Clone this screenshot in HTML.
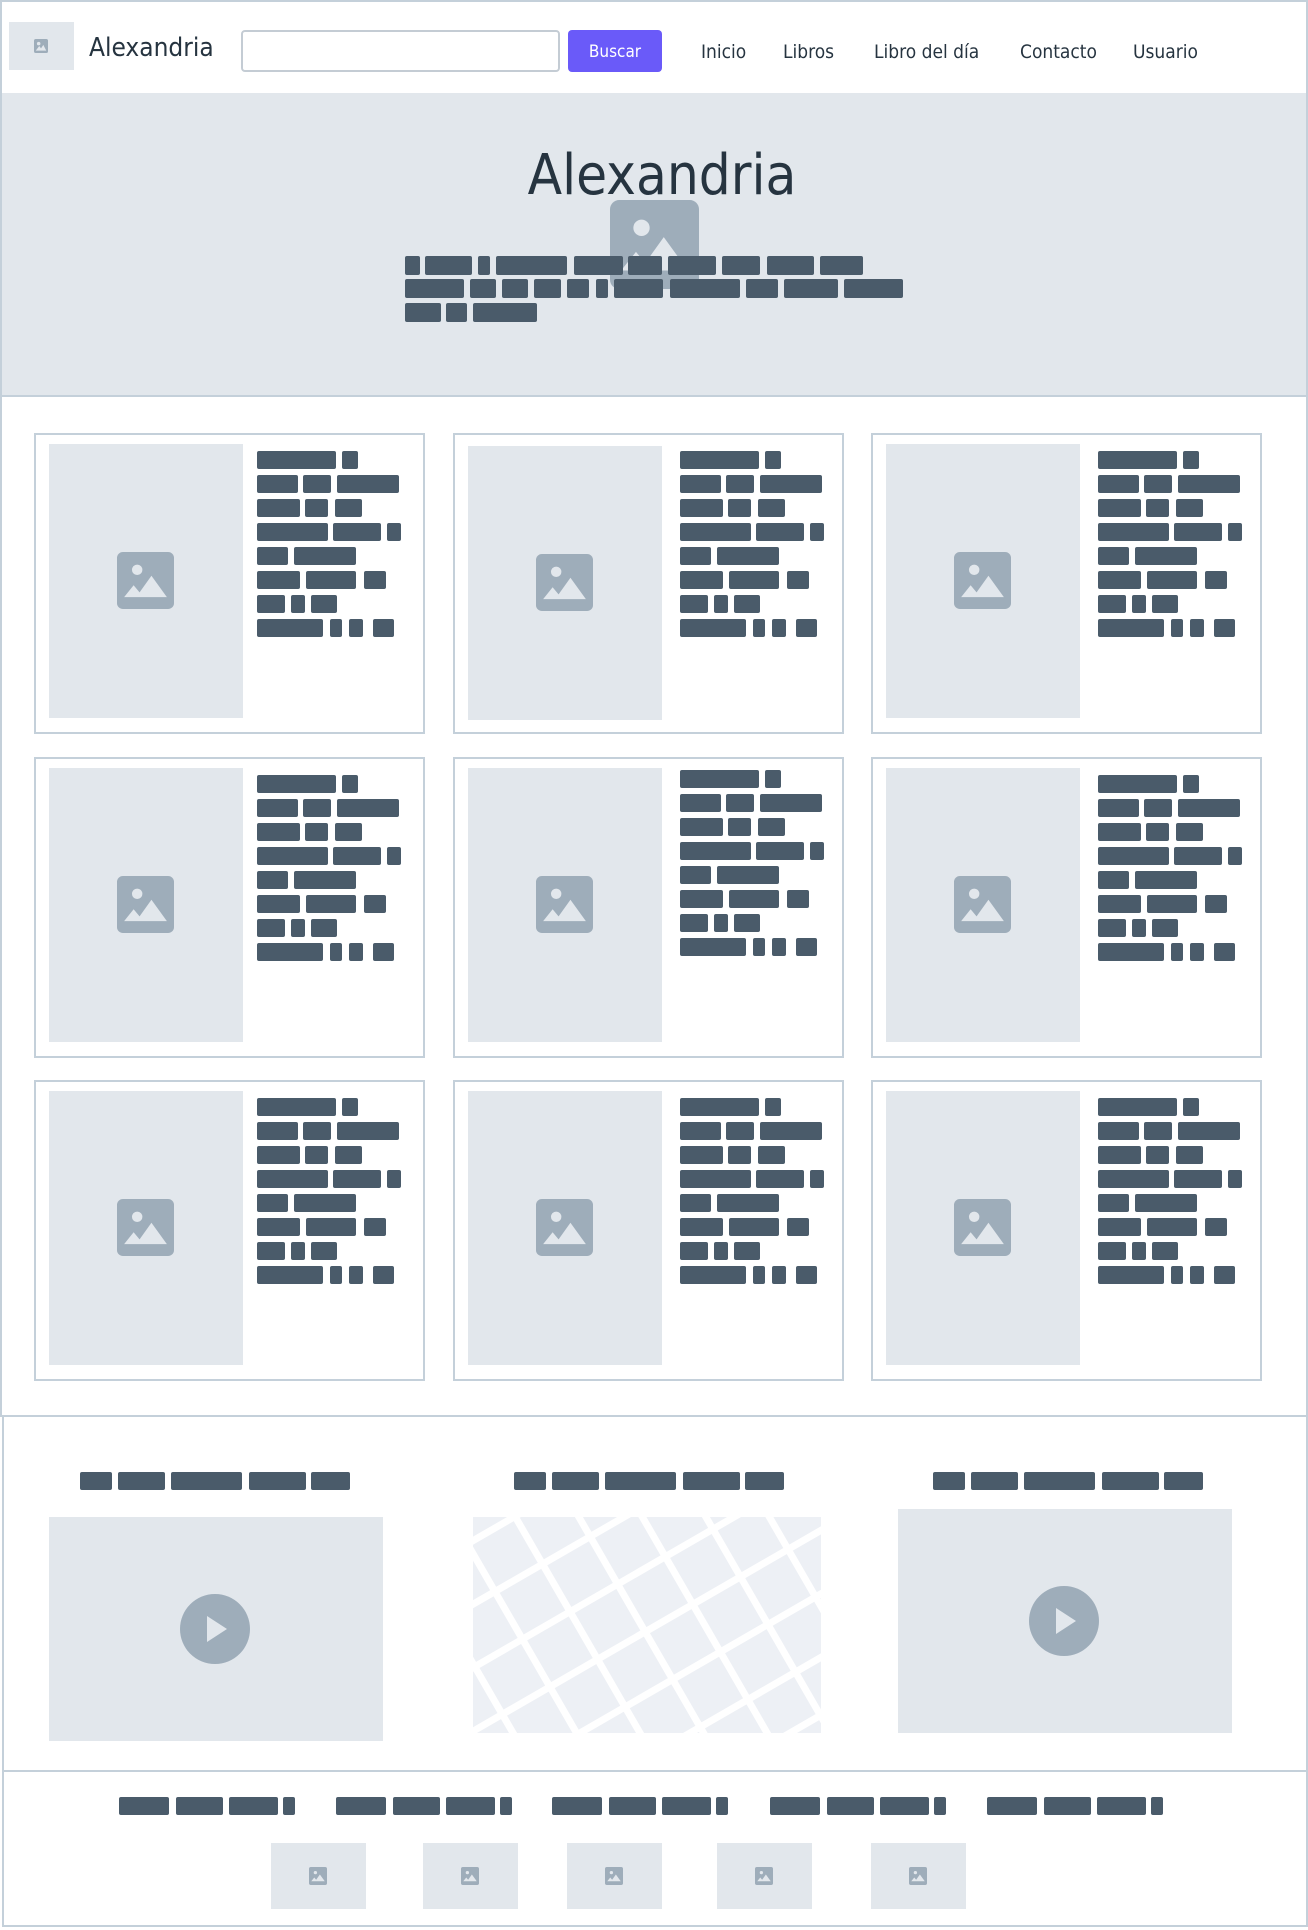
<!DOCTYPE html>
<html><head><meta charset="utf-8"><style>
*{box-sizing:border-box;margin:0;padding:0}
html,body{width:1308px;height:1930px;overflow:hidden}
body{background:#fff;font-family:"DejaVu Sans","Liberation Sans",sans-serif;position:relative;color:#263440}
.a{position:absolute}
.b{position:absolute;background:#4a5b6a;border-radius:2px}
.ph{position:absolute;background:#e2e7ec}
.bd{position:absolute;border:2px solid #c4d0da}
.nav a{position:absolute;top:41px;font-size:19px;color:#263440;text-decoration:none;font-family:"DejaVu Sans Condensed","DejaVu Sans",sans-serif}
</style></head><body>
<div class="bd" style="left:0;top:0;width:1308px;height:95px"></div>
<div class="ph" style="left:9px;top:22px;width:65px;height:48px"></div>
<svg class="a" style="left:34px;top:39px" width="14" height="14" viewBox="0 0 24 24"><rect width="24" height="24" rx="3" fill="#9eadba"/><circle cx="8" cy="8" r="3" fill="#e2e7ec"/><path d="M3 20l6-8 3 4 4-6 5 10z" fill="#e2e7ec"/></svg>
<div class="a" style="left:89px;top:33px;font-size:26px;font-family:'DejaVu Sans Condensed','DejaVu Sans',sans-serif">Alexandria</div>
<div class="a" style="left:241px;top:30px;width:319px;height:42px;border:2px solid #c4ccd4;border-radius:4px"></div>
<div class="a" style="left:568px;top:30px;width:94px;height:42px;background:#6a5af9;border-radius:4px;color:#fff;font-size:17px;line-height:44px;text-align:center;font-family:'DejaVu Sans Condensed',sans-serif">Buscar</div>
<div class="nav"><a style="left:701px">Inicio</a><a style="left:783px">Libros</a><a style="left:874px">Libro del día</a><a style="left:1020px">Contacto</a><a style="left:1133px">Usuario</a></div>

<div class="ph" style="left:0;top:93px;width:1308px;height:304px;border-left:2px solid #c4d0da;border-right:2px solid #c4d0da;border-bottom:2px solid #c4d0da"></div>
<div class="a" style="left:0;width:1308px;padding-left:16px;top:143px;text-align:center;font-size:56px;color:#263440;font-family:'DejaVu Sans Condensed','DejaVu Sans',sans-serif">Alexandria</div>
<svg class="a" style="left:610px;top:200px" width="89" height="89" viewBox="0 0 24 24"><rect width="24" height="24" rx="2.5" fill="#9eadba"/><circle cx="8.5" cy="7.5" r="2.2" fill="#e2e7ec"/><path d="M3 19l4-5 2.5 3 5-7L21 19z" fill="#e2e7ec"/></svg>

<div class="bd" style="left:0;top:397px;width:1308px;height:1020px;border-top:0"></div>

<div class="bd" style="left:2px;top:1415px;width:1306px;height:357px"></div>
<div class="ph" style="left:49px;top:1517px;width:334px;height:224px"></div>
<svg class="a" style="left:180px;top:1594px" width="70" height="70" viewBox="0 0 70 70"><circle cx="35" cy="35" r="35" fill="#9eadba"/><path d="M27 22l20 13-20 13z" fill="#e2e7ec"/></svg>
<svg class="a" style="left:473px;top:1517px" width="348" height="216" viewBox="0 0 348 216"><rect width="348" height="216" fill="#edf0f5"/>
<g stroke="#fff" stroke-width="7" fill="none" transform="translate(174 108) rotate(-30)">
<path d="M-300 -160H300M-300 -105H300M-300 -50H300M-300 5H300M-300 60H300M-300 115H300M-300 165H300"/>
<path d="M-280 -300V300M-225 -300V300M-170 -300V300M-115 -300V300M-60 -300V300M-5 -300V300M50 -300V300M105 -300V300M160 -300V300M215 -300V300M270 -300V300"/>
</g></svg>
<div class="ph" style="left:898px;top:1509px;width:334px;height:224px"></div>
<svg class="a" style="left:1029px;top:1586px" width="70" height="70" viewBox="0 0 70 70"><circle cx="35" cy="35" r="35" fill="#9eadba"/><path d="M27 22l20 13-20 13z" fill="#e2e7ec"/></svg>

<div class="bd" style="left:2px;top:1770px;width:1306px;height:157px"></div>
<script>
var s=1.2305;
function bar(px,x,y,w,h){var d=document.createElement('div');d.className='b';d.style.left=(px+x)+'px';d.style.top=y+'px';d.style.width=w+'px';d.style.height=h+'px';document.body.appendChild(d);}
function row(x0,y,segs,h){segs.forEach(function(g){bar(x0,Math.round(g[0]*s),y,Math.round((g[1]-g[0])*s),h||18);});}
row(405,256,[[0,12],[16,54],[59,69],[74,132],[137,177],[181,209],[214,253],[258,289],[294,332],[337,372]],19);
row(405,279,[[0,48],[53,74],[79,100],[105,127],[132,150],[155,165],[170,210],[215,272],[277,303],[308,352],[357,405]],19);
row(405,303,[[0,29],[33,50],[55,107]],19);
var L=[[[0,64],[69,82]],[[0,33],[37,60],[65,115]],[[0,35],[39,58],[63,85]],[[0,58],[62,101],[106,117]],[[0,25],[30,80]],[[0,35],[40,81],[87,105]],[[0,23],[28,39],[44,65]],[[0,54],[59,69],[75,86],[94,111]]];
var cx=[34,453,871],cy=[433,757,1080];
cy.forEach(function(y,ri){cx.forEach(function(x,ci){
 var c=document.createElement('div');c.className='bd';c.style.cssText='left:'+x+'px;top:'+y+'px;width:391px;height:301px';document.body.appendChild(c);
 var p=document.createElement('div');p.className='ph';var py=y+(ci==1&&ri==0?13:11);p.style.cssText='left:'+(x+15)+'px;top:'+py+'px;width:194px;height:274px';document.body.appendChild(p);
 var ic=document.createElementNS('http://www.w3.org/2000/svg','svg');ic.setAttribute('width','57');ic.setAttribute('height','57');ic.setAttribute('viewBox','0 0 24 24');ic.setAttribute('class','a');ic.style.left=(x+15+68)+'px';ic.style.top=(py+108)+'px';
 ic.innerHTML='<rect width="24" height="24" rx="2.5" fill="#9eadba"/><circle cx="8.5" cy="7.5" r="2.2" fill="#e2e7ec"/><path d="M3 19l4-5 2.5 3 5-7L21 19z" fill="#e2e7ec"/>';document.body.appendChild(ic);
 var tx=x+(ci==0?223:227), ty=y+(ci==1&&ri==1?13:18);
 L.forEach(function(r,i){row(tx,ty+Math.round(i*24),r);});
});});
var H=[[0,26],[31,69],[74,132],[137,183],[188,220]];
[65,418,758].forEach(function(x){row(Math.round(x*s),1472,H);});
var G=[[0,41],[46,84],[89,129],[133,143]];
[97,273,449,626,802].forEach(function(x){row(Math.round(x*s),1797,G);});
[220,344,461,583,708].forEach(function(x){var X=Math.round(x*s);var p=document.createElement('div');p.className='ph';p.style.cssText='left:'+X+'px;top:1843px;width:95px;height:66px';document.body.appendChild(p);
 var ic=document.createElementNS('http://www.w3.org/2000/svg','svg');ic.setAttribute('width','18');ic.setAttribute('height','18');ic.setAttribute('viewBox','0 0 24 24');ic.setAttribute('class','a');ic.style.left=(X+38)+'px';ic.style.top='1867px';
 ic.innerHTML='<rect width="24" height="24" rx="2.5" fill="#9eadba"/><circle cx="8.5" cy="7.5" r="2.2" fill="#e2e7ec"/><path d="M3 19l4-5 2.5 3 5-7L21 19z" fill="#e2e7ec"/>';document.body.appendChild(ic);});
</script>
</body></html>
